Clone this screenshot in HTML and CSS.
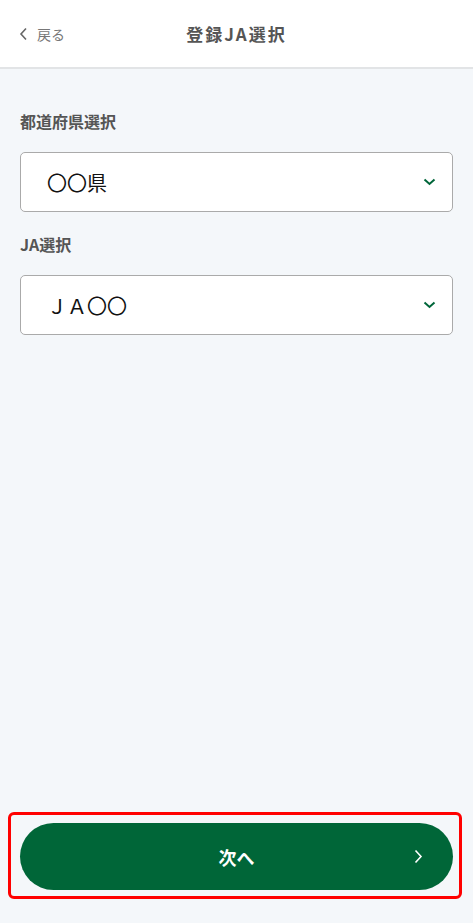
FILE: index.html
```
<!DOCTYPE html>
<html lang="ja">
<head>
  <meta charset="UTF-8" />
  <title>登録JA選択</title>
  <link rel="stylesheet" href="styles.css">
</head>
<body>
  <div class="page">
    <header class="topbar">
      <a href="#" class="back-link">
        <svg width="9" height="14" viewBox="0 0 9 14"><path d="M7 1.5 L2 7 L7 12.5" fill="none" stroke="#666" stroke-width="1.6"/></svg>
        <span>戻る</span>
      </a>
      <h1>登録JA選択</h1>
    </header>

    <main class="form">
      <label class="field-label">都道府県選択</label>
      <div class="select-box">
        <span>〇〇県</span>
        <svg class="chev" width="13" height="8" viewBox="0 0 13 8"><path d="M1.5 1.5 L6.5 6 L11.5 1.5" fill="none" stroke="#00663a" stroke-width="2"/></svg>
      </div>

      <label class="field-label">JA選択</label>
      <div class="select-box">
        <span>ＪＡ〇〇</span>
        <svg class="chev" width="13" height="8" viewBox="0 0 13 8"><path d="M1.5 1.5 L6.5 6 L11.5 1.5" fill="none" stroke="#00663a" stroke-width="2"/></svg>
      </div>
    </main>

    <footer class="footer">
      <div class="highlight">
        <button class="next-btn">
          <span>次へ</span>
          <svg class="next-chev" width="9" height="15" viewBox="0 0 9 15"><path d="M1.5 1.5 L7 7.5 L1.5 13.5" fill="none" stroke="#fff" stroke-width="1.6"/></svg>
        </button>
      </div>
    </footer>
  </div>
</body>
</html>
```

FILE: styles.css
```
body {
  margin: 0;
  font-family: "Noto Sans CJK JP", "Noto Sans", sans-serif;
  background: #f4f7fa;
  color: #333;
}

.page {
  display: flex;
  flex-direction: column;
  min-height: 100vh;
}

.topbar {
  height: 67px;
  background: white;
  border-bottom: 2px solid #e2e4e6;
  display: flex;
  align-items: center;
  justify-content: center;
  position: relative;
}

.topbar h1 {
  margin: 0;
  font-size: 17px;
  font-weight: bold;
  color: #555;
  letter-spacing: 2px;
}

.back-link {
  position: absolute;
  left: 19px;
  top: 24px;
  display: flex;
  align-items: center;
  gap: 9px;
  text-decoration: none;
  color: #777;
  font-size: 14px;
}

.form {
  padding: 40px 20px;
  display: flex;
  flex-direction: column;
}

.field-label {
  font-size: 16px;
  font-weight: bold;
  color: #555;
  line-height: 24px;
  margin-bottom: 19px;
}

.select-box {
  height: 58px;
  background: white;
  border: 1px solid #aaa;
  border-radius: 5px;
  display: flex;
  align-items: center;
  justify-content: space-between;
  padding: 0 16px 0 26px;
  margin-bottom: 20px;
  font-size: 20px;
  color: #111;
}

.footer {
  margin-top: auto;
  padding: 0 11px 24px 8px;
}

.highlight {
  border: 3px solid #ff0000;
  border-radius: 6px;
  padding: 8px 6px 6px 9px;
}

.next-btn {
  width: 100%;
  height: 67px;
  border: none;
  border-radius: 34px;
  background: #006638;
  color: white;
  font-family: inherit;
  font-size: 18px;
  font-weight: bold;
  display: flex;
  align-items: center;
  justify-content: center;
  position: relative;
}

.next-chev {
  position: absolute;
  right: 30px;
  top: 26px;
}
```
